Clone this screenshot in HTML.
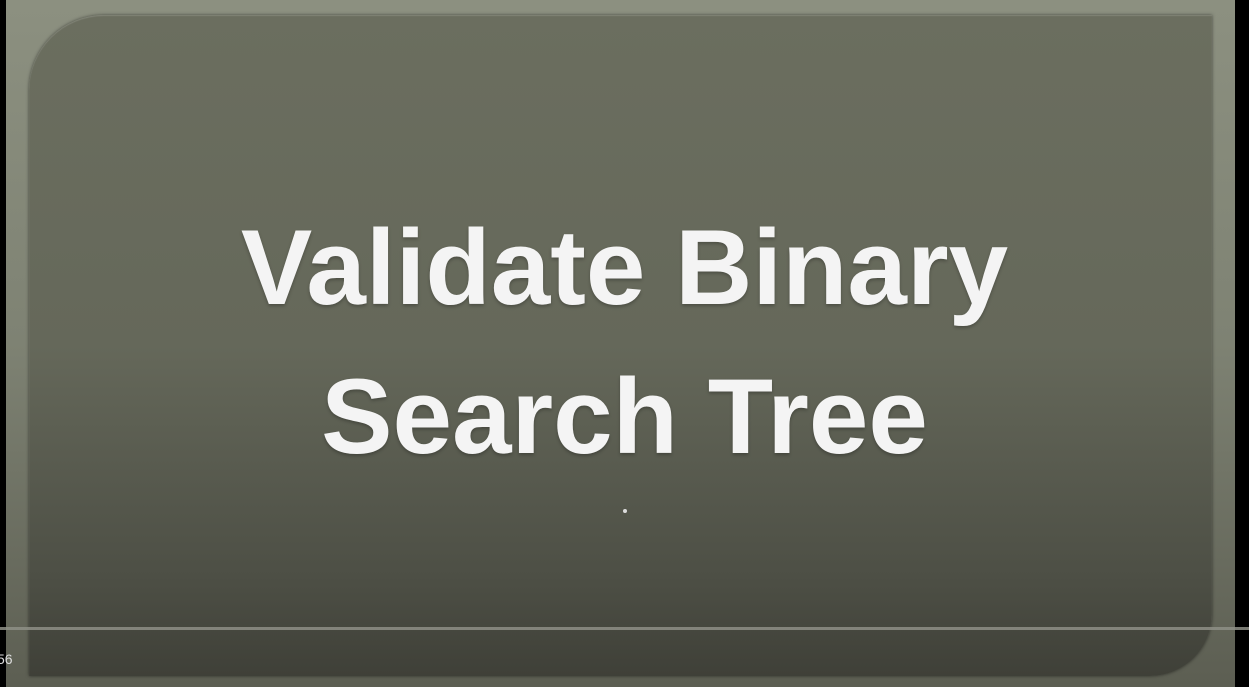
<!DOCTYPE html>
<html><head><meta charset="utf-8"><style>
html,body{margin:0;padding:0;width:1249px;height:687px;overflow:hidden;background:#000;}
.frame{position:absolute;left:6px;top:0;width:1229px;height:687px;background:linear-gradient(#8c9080,#7e8273 50%,#5c5e52);}
.panel{position:absolute;left:29px;top:15px;width:1183px;height:661px;border-radius:75px 0 62px 0;
background:linear-gradient(#6b6e5f,#65685a 50%,#4d4f45 85%,#3f4038);box-shadow:0 0 3px rgba(0,0,0,.5), inset 0 1px 1px rgba(255,255,255,.15);}
.line{position:absolute;left:0;top:627px;width:1249px;height:3px;background:#8e8f86;opacity:.85;}
.t{position:absolute;left:0;width:1249px;text-align:center;font-family:"Liberation Sans",Arial,sans-serif;font-weight:bold;font-size:107px;color:#f4f4f4;line-height:1;
text-shadow:0 2px 3px rgba(0,0,0,.25);}
.dot{position:absolute;left:623px;top:509px;width:4px;height:4px;border-radius:50%;background:#ddd;}
.n{position:absolute;left:-3px;top:651px;font-family:"Liberation Sans",sans-serif;font-size:14px;color:#ddd;}
</style></head><body>
<div class="frame"></div>
<div class="panel"></div>
<div class="t" style="top:214px;">Validate Binary</div>
<div class="t" style="top:363px;">Search Tree</div>
<div class="dot"></div>
<div class="line"></div>
<div class="n">56</div>
</body></html>
